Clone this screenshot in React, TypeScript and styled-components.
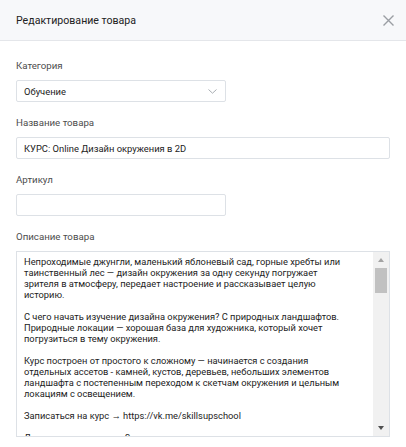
import styled, { createGlobalStyle } from "styled-components";

const GlobalStyle = createGlobalStyle`
  body {
    margin: 0;
    background: #fff;
    font-family: Roboto, "Liberation Sans", Arial, sans-serif;
  }
`;

const Modal = styled.div`
  width: 406px;
  min-height: 447px;
  background: #fff;
`;

const Header = styled.div`
  height: 40px;
  display: flex;
  align-items: center;
  justify-content: space-between;
  padding: 0 16px;
  background: #f7f8fa;
  border-bottom: 1px solid #e4e6ea;
`;

const Title = styled.div`
  font-size: 10.6px;
  color: #222;
`;

const Close = styled.button`
  width: 14px;
  height: 14px;
  padding: 0;
  border: 0;
  background: none;
  display: flex;
  align-items: center;
  justify-content: center;
  margin-right: -5px;
`;

const Body = styled.div`
  display: flex;
  flex-direction: column;
  gap: 14px;
  padding: 18px 16px 0;
`;

const Field = styled.div`
  display: flex;
  flex-direction: column;
  gap: 8px;
`;

const Label = styled.div`
  font-size: 9.7px;
  line-height: 13px;
  color: #4c4c4c;
`;

const Box = styled.div<{ $w?: number }>`
  box-sizing: border-box;
  width: ${(p) => (p.$w ? `${p.$w}px` : "100%")};
  height: 22px;
  border: 1px solid #dde1e6;
  border-radius: 2px;
  display: flex;
  align-items: center;
  justify-content: space-between;
  padding: 0 8px 0 7px;
  font-size: 9.4px;
  color: #222;
`;

const Area = styled.div`
  box-sizing: border-box;
  height: 186px;
  border: 1px solid #dde1e6;
  display: flex;
`;

const Text = styled.div`
  flex: 1;
  overflow: hidden;
  padding: 4px 7px;
  white-space: pre;
  font-size: 9.3px;
  line-height: 11px;
  color: #222;
`;

const Scrollbar = styled.div`
  width: 16px;
  background: #f1f1f1;
  display: flex;
  flex-direction: column;
`;

const ArrowBtn = styled.div<{ $down?: boolean }>`
  height: 16px;
  display: flex;
  align-items: center;
  justify-content: center;
  &::after {
    content: "";
    border-left: 3.5px solid transparent;
    border-right: 3.5px solid transparent;
    ${(p) =>
      p.$down
        ? "border-top: 4px solid #505050;"
        : "border-bottom: 4px solid #a3a3a3;"}
  }
`;

const Track = styled.div`
  flex: 1;
  padding: 0 2px;
`;

const Thumb = styled.div`
  height: 25px;
  background: #c1c1c1;
`;

const description = `Непроходимые джунгли, маленький яблоневый сад, горные хребты или
таинственный лес — дизайн окружения за одну секунду погружает
зрителя в атмосферу, передает настроение и рассказывает целую
историю.

С чего начать изучение дизайна окружения? С природных ландшафтов.
Природные локации — хорошая база для художника, который хочет
погрузиться в тему окружения.

Курс построен от простого к сложному — начинается с создания
отдельных ассетов - камней, кустов, деревьев, небольших элементов
ландшафта с постепенным переходом к скетчам окружения и цельным
локациям с освещением.

Записаться на курс → https://vk.me/skillsupschool

Длительность курса — 2 месяца.`;

const Chevron = () => (
  <svg width="9" height="5" viewBox="0 0 9 5">
    <path d="M0.5 0.5 L4.5 4.2 L8.5 0.5" fill="none" stroke="#a8adb3" strokeWidth="1" />
  </svg>
);

const Cross = () => (
  <svg width="11" height="11" viewBox="0 0 11 11">
    <path d="M0.5 0.5 L10.5 10.5 M10.5 0.5 L0.5 10.5" stroke="#9a9ea3" strokeWidth="1.4" />
  </svg>
);

export default function App() {
  return (
    <Modal>
      <GlobalStyle />
      <Header>
        <Title>Редактирование товара</Title>
        <Close>
          <Cross />
        </Close>
      </Header>
      <Body>
        <Field>
          <Label>Категория</Label>
          <Box $w={210}>
            <span>Обучение</span>
            <Chevron />
          </Box>
        </Field>
        <Field>
          <Label>Название товара</Label>
          <Box>КУРС: Online Дизайн окружения в 2D</Box>
        </Field>
        <Field>
          <Label>Артикул</Label>
          <Box $w={210} />
        </Field>
        <Field>
          <Label>Описание товара</Label>
          <Area>
            <Text>{description}</Text>
            <Scrollbar>
              <ArrowBtn />
              <Track>
                <Thumb />
              </Track>
              <ArrowBtn $down />
            </Scrollbar>
          </Area>
        </Field>
      </Body>
    </Modal>
  );
}
